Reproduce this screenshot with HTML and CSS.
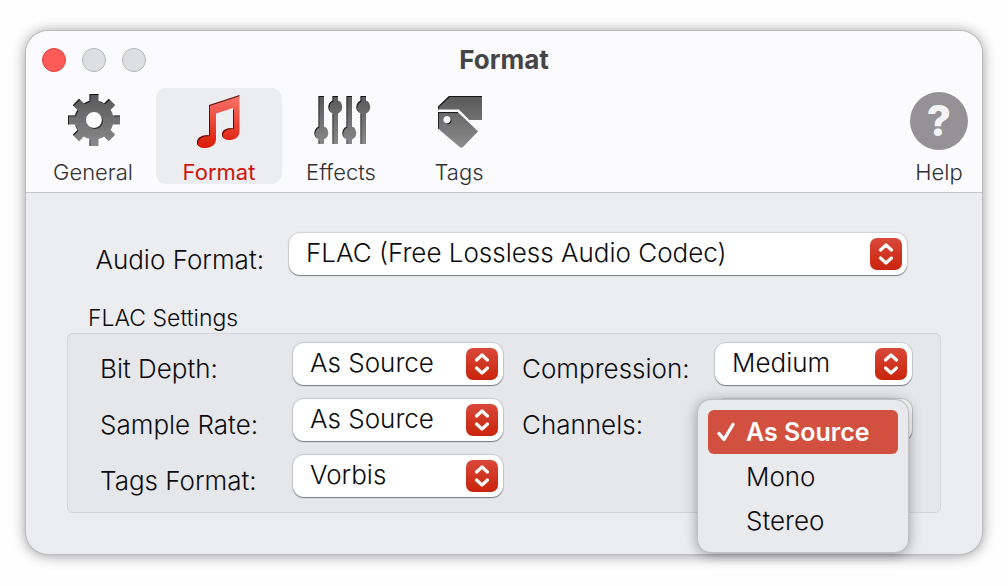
FILE: index.html
```html
<!DOCTYPE html>
<html lang="en">

<head>
    <meta charset="utf-8">
    <meta name="viewport" content="width=device-width, initial-scale=1.0">
    <title>Format</title>
    <link rel="stylesheet" href="styles.css">
</head>

<body>

    <!-- gradients and shapes shared by the icons -->
    <svg class="defs" width="0" height="0" aria-hidden="true">
        <defs>
            <linearGradient id="gray" gradientUnits="userSpaceOnUse" x1="0" y1="0" x2="0" y2="56">
                <stop offset="0" stop-color="#555" />
                <stop offset="1" stop-color="#8c8c8c" />
            </linearGradient>
            <linearGradient id="red" gradientUnits="userSpaceOnUse" x1="0" y1="0" x2="0" y2="56">
                <stop offset="0" stop-color="#fb7a70" />
                <stop offset="1" stop-color="#dc1a08" />
            </linearGradient>
            <filter id="inset" filterUnits="userSpaceOnUse" x="0" y="0" width="58" height="58">
                <feOffset in="SourceAlpha" dx="1" dy="1" result="off" />
                <feGaussianBlur in="off" stdDeviation="0.5" result="soft" />
                <feComposite in="SourceAlpha" in2="soft" operator="out" result="edge" />
                <feFlood flood-color="#000" flood-opacity="0.9" />
                <feComposite in2="edge" operator="in" result="shade" />
                <feMerge>
                    <feMergeNode in="SourceGraphic" />
                    <feMergeNode in="shade" />
                </feMerge>
            </filter>
            <symbol id="arrows" viewBox="0 0 32 32">
                <path d="M10.500 12L16 7L21.500 12M10.500 20L16 25L21.500 20" fill="none" stroke="#fff" stroke-width="3.2" stroke-linecap="round" stroke-linejoin="round" />
            </symbol>
        </defs>
    </svg>

    <main class="window">

        <header>
            <div class="titlebar">
                <div class="lights">
                    <button class="light close" aria-label="Close"></button>
                    <button class="light" aria-label="Minimize"></button>
                    <button class="light" aria-label="Zoom"></button>
                </div>
                <h1>Format</h1>
            </div>

            <nav class="toolbar">
                <button class="tab wide">
                    <svg viewBox="0 0 56 56" aria-hidden="true">
                        <g filter="url(#inset)" fill="none" stroke="url(#gray)">
                            <circle cx="29" cy="28" r="13.700" stroke-width="11.400" />
                            <path stroke-width="9" d="M29.010 2L29 11M29.010 54L29 45M3 28.010L12 28M55 28.010L46 28M11 10L18 17M47 10L40 17M11 46L18 39M47 46L40 39" />
                        </g>
                    </svg>
                    <span>General</span>
                </button>
                <button class="tab wide valgt">
                    <svg viewBox="0 0 56 56" aria-hidden="true">
                        <path filter="url(#inset)" fill="url(#red)" d="M18 13L48.500 3V39C48.500 44.500 44.500 48 39 48C34 48 31 46 31 42.500C31 38 36 35.500 42 36.500V16L25 21.500V47C25 52.500 20.500 56 14.500 56C9 56 6 54 6 50.500C6 45.500 11.500 42.500 18 43.500Z" />
                    </svg>
                    <span>Format</span>
                </button>
                <button class="tab">
                    <svg viewBox="0 0 56 56" aria-hidden="true">
                        <path filter="url(#inset)" fill="url(#gray)" d="M5.500 4h5.500v48h-5.500zM1.300 41a7 7 0 0 1 14 0a7 7 0 0 1-14 0zM19.500 4h5.500v48h-5.500zM15.300 15a7 7 0 0 1 14 0a7 7 0 0 1-14 0zM33.500 4h5.500v48h-5.500zM29.300 41a7 7 0 0 1 14 0a7 7 0 0 1-14 0zM47.500 4h5.500v48h-5.500zM43.300 15a7 7 0 0 1 14 0a7 7 0 0 1-14 0z" />
                    </svg>
                    <span>Effects</span>
                </button>
                <button class="tab">
                    <svg viewBox="0 0 56 56" aria-hidden="true">
                        <path filter="url(#inset)" fill="url(#gray)" fill-rule="evenodd" d="M18 4H51V28H38.500L28 17.500H7V14.500zM7 20H26.500L47 39.500L31.500 55.500H29.500L7 36.500zM16 24a3.700 3.700 0 1 0 .1 0z" />
                    </svg>
                    <span>Tags</span>
                </button>
                <button class="tab help">
                    <span class="badge" aria-hidden="true">?</span>
                    <span>Help</span>
                </button>
            </nav>
        </header>

        <form class="content">

            <div class="audio">
                <label for="format">Audio Format:</label>
                <div class="dropdown">
                    <select id="format">
                        <option>FLAC (Free Lossless Audio Codec)</option>
                    </select>
                    <svg aria-hidden="true"><use href="#arrows" /></svg>
                </div>
            </div>

            <h2>FLAC Settings</h2>

            <section class="settings">
                <label for="depth">Bit Depth:</label>
                <div class="dropdown">
                    <select id="depth">
                        <option>As Source</option>
                    </select>
                    <svg aria-hidden="true"><use href="#arrows" /></svg>
                </div>
                <label for="compression">Compression:</label>
                <div class="dropdown">
                    <select id="compression">
                        <option>Medium</option>
                    </select>
                    <svg aria-hidden="true"><use href="#arrows" /></svg>
                </div>

                <label for="rate">Sample Rate:</label>
                <div class="dropdown">
                    <select id="rate">
                        <option>As Source</option>
                    </select>
                    <svg aria-hidden="true"><use href="#arrows" /></svg>
                </div>
                <label for="channels">Channels:</label>
                <div class="dropdown">
                    <select id="channels">
                        <option>As Source</option>
                    </select>
                    <svg aria-hidden="true"><use href="#arrows" /></svg>
                    <div class="menu">
                        <button type="button" class="valgt">
                            <svg viewBox="0 0 20 20" aria-hidden="true"><path d="M3 11.500L8 17.500L17 2.500" fill="none" stroke="#fff" stroke-width="3.4" stroke-linecap="round" stroke-linejoin="round" /></svg>
                            As Source
                        </button>
                        <button type="button">Mono</button>
                        <button type="button">Stereo</button>
                    </div>
                </div>

                <label for="tags">Tags Format:</label>
                <div class="dropdown">
                    <select id="tags">
                        <option>Vorbis</option>
                    </select>
                    <svg aria-hidden="true"><use href="#arrows" /></svg>
                </div>
            </section>

        </form>

    </main>

</body></html>
```
FILE: styles.css
```css
* {
    box-sizing: border-box;
}

body {
    margin: 0;
    padding: 31px 26px;
    background-color: #fefefe;
    font-family: Inter, "Liberation Sans", sans-serif;
    font-size: 26px;
    font-weight: 300;
    color: #0c0c0e;
}

button,
select {
    font: inherit;
    color: inherit;
    border: none;
    margin: 0;
    padding: 0;
}

button {
    background: none;
}

.defs {
    position: absolute;
}

.window {
    border-radius: 22px;
    background-color: #ecedf0;
    box-shadow: 0 0 0 1px #bcbcc0, 0 1px 14px rgba(0, 0, 0, .45);
}

header {
    background-color: #fbfbfe;
    border-bottom: 1px solid #c4c5c7;
    border-radius: 22px 22px 0 0;
    padding-bottom: 8px;
}

.titlebar {
    display: grid;
    grid-template-columns: 1fr auto 1fr;
    align-items: center;
    height: 57px;
    padding: 0 16px;
}

.lights {
    display: flex;
    gap: 16px;
}

.light {
    width: 24px;
    height: 24px;
    border-radius: 50%;
    border: 1px solid #b5b7b9;
    background-color: #dddfe1;
}

.light.close {
    background-color: #fc5b57;
    border-color: #d9423f;
}

h1 {
    margin: 0;
    font-size: 26px;
    font-weight: 700;
    color: #454547;
}

.toolbar {
    display: flex;
    padding: 0 14px 0 4px;
}

.tab {
    display: flex;
    flex-direction: column;
    align-items: center;
    justify-content: space-between;
    width: 118px;
    height: 96px;
    padding: 4px 0 0;
    border-radius: 10px;
    font-size: 22px;
    line-height: 24px;
    color: #303032;
}

.tab.wide {
    width: 126px;
}

.tab svg {
    width: 56px;
    height: 56px;
    overflow: visible;
}

.tab.valgt {
    background-color: #ecedf0;
    color: #d0140c;
    font-weight: 400;
}

.tab.help {
    width: 58px;
    margin-left: auto;
}

.badge {
    width: 58px;
    height: 58px;
    border-radius: 50%;
    background-color: #949294;
    color: #f4f4f6;
    font-size: 42px;
    font-weight: 800;
    line-height: 58px;
    text-align: center;
}

.content {
    padding: 40px 41px 41px;
}

label {
    padding-top: 10px;
}

.audio {
    display: grid;
    grid-template-columns: 222px 1fr;
    align-items: center;
    padding-right: 34px;
}

.audio label {
    padding-right: 25px;
    text-align: right;
}

.dropdown {
    position: relative;
    display: grid;
    align-items: center;
}

.dropdown select {
    grid-area: 1 / 1;
    appearance: none;
    width: 100%;
    height: 42px;
    padding: 0 44px 4px 17px;
    border-radius: 11px;
    background-color: #fff;
    box-shadow: 0 0 1px 1px rgba(0, 0, 0, .12), 0 1px 1px rgba(0, 0, 0, .4);
}

.dropdown > svg {
    grid-area: 1 / 1;
    justify-self: end;
    width: 32px;
    height: 32px;
    margin-right: 5px;
    border-radius: 7px;
    background: linear-gradient(#d8483a, #c9240a);
    pointer-events: none;
    z-index: 1;
}

h2 {
    margin: 29px 0 0 21px;
    font-size: 23px;
    font-weight: 300;
    line-height: 29px;
}

.settings {
    display: grid;
    grid-template-columns: 193px 210px 212px 1fr;
    row-gap: 14px;
    padding: 9px 28px 15px 32px;
    border: 1px solid #d4d5d8;
    border-radius: 6px;
    background-color: #e6e7ea;
}

.settings label:nth-of-type(even) {
    padding-left: 19px;
}

/* open menu, lies over its own drop-down */
.menu {
    position: absolute;
    z-index: 2;
    top: 1px;
    left: -17px;
    width: 210px;
    padding: 10px;
    border-radius: 13px;
    background-color: #e9eaed;
    box-shadow: 0 0 0 1px #c0c0c3, 0 2px 14px rgba(0, 0, 0, .4);
}

.menu button {
    display: block;
    width: 100%;
    height: 44px;
    padding-left: 38px;
    border-radius: 6px;
    text-align: left;
}

.menu .valgt {
    display: flex;
    align-items: center;
    gap: 10px;
    padding-left: 8px;
    background-color: #d15040;
    color: #fff;
    font-size: 25px;
    font-weight: 600;
}

.menu svg {
    width: 20px;
    height: 20px;
}
```
